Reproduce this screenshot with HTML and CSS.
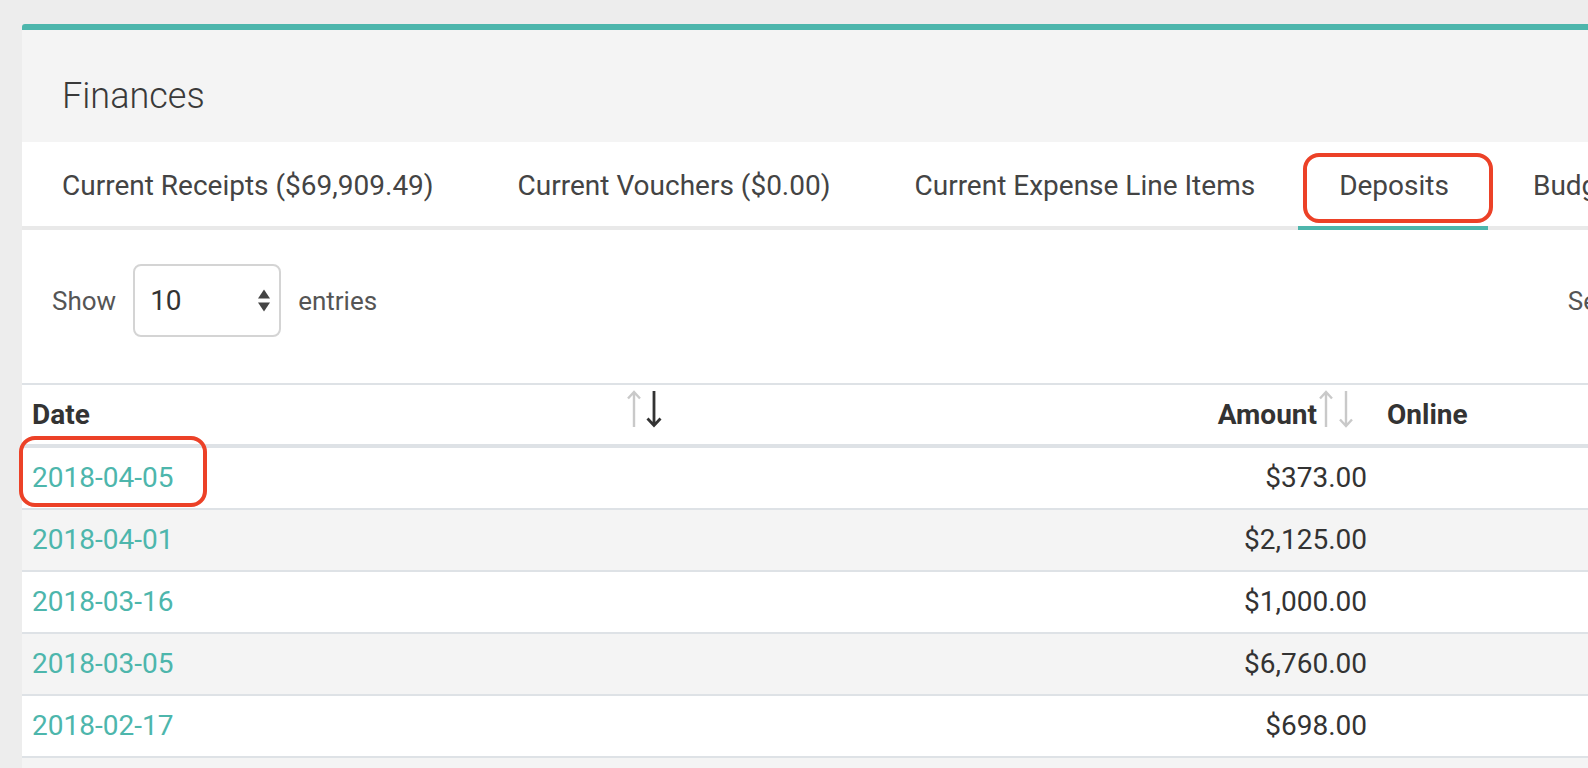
FILE: index.html
```html
<!DOCTYPE html>
<html>
<head>
<meta charset="UTF-8">
<meta name="viewport" content="width=device-width, initial-scale=1">
<title>Finances</title>
<link rel="stylesheet" href="styles.css">
</head>
<body>
<div class="card">
	<div class="card-title">Finances</div>

	<ul class="tabs">
		<li class="tab">Current Receipts ($69,909.49)</li>
		<li class="tab">Current Vouchers ($0.00)</li>
		<li class="tab">Current Expense Line Items</li>
		<li class="tab active">Deposits<span class="mark mark-tab"></span></li>
		<li class="tab">Budget</li>
		<li class="tab">Reports</li>
	</ul>

	<div class="toolbar">
		<div class="length">
			<span>Show</span>
			<span class="select">
				<span>10</span>
				<svg class="spin" width="12" height="23" viewBox="0 0 12 23">
					<path d="M0 9.5 L6 0.5 L12 9.5 Z" fill="#444"/>
					<path d="M0 13.5 L12 13.5 L6 22.5 Z" fill="#444"/>
				</svg>
			</span>
			<span>entries</span>
		</div>
		<div class="filter">
			<span>Search:</span>
			<span class="search"></span>
		</div>
	</div>

	<table class="grid">
		<colgroup>
			<col class="col-date">
			<col class="col-amount">
			<col>
		</colgroup>
		<thead>
			<tr>
				<th class="sort">Date
					<svg class="arrows" width="36" height="38" viewBox="0 0 36 38">
						<g fill="none" stroke-width="2.4">
							<path d="M7 2 V37 M1 8.5 L7 2 L13 8.5" stroke="#c9c9c9"/>
							<path d="M27 1 V35 M20.5 28.5 L27 35.5 L33.5 28.5" stroke="#333" stroke-width="2.8"/>
						</g>
					</svg>
				</th>
				<th class="sort num">Amount
					<svg class="arrows" width="36" height="38" viewBox="0 0 36 38">
						<g fill="none" stroke="#c9c9c9" stroke-width="2.4">
							<path d="M7 2 V37 M1 8.5 L7 2 L13 8.5"/>
							<path d="M27 1 V36 M21 29.5 L27 36 L33 29.5"/>
						</g>
					</svg>
				</th>
				<th>Online</th>
			</tr>
		</thead>
		<tbody>
			<tr><td><a class="link" href="#">2018-04-05<span class="mark mark-date"></span></a></td><td class="num">$373.00</td><td></td></tr>
			<tr><td><a class="link" href="#">2018-04-01</a></td><td class="num">$2,125.00</td><td></td></tr>
			<tr><td><a class="link" href="#">2018-03-16</a></td><td class="num">$1,000.00</td><td></td></tr>
			<tr><td><a class="link" href="#">2018-03-05</a></td><td class="num">$6,760.00</td><td></td></tr>
			<tr><td><a class="link" href="#">2018-02-17</a></td><td class="num">$698.00</td><td></td></tr>
			<tr><td><a class="link" href="#">2018-02-03</a></td><td class="num">$1,240.00</td><td></td></tr>
			<tr><td><a class="link" href="#">2018-01-20</a></td><td class="num">$515.00</td><td></td></tr>
		</tbody>
	</table>
</div>
</body>
</html>
```

FILE: styles.css
```css
html, body {
	margin: 0;
	padding: 0;
	overflow: hidden;
}
body {
	background-color: #ededed;
	font-family: Roboto, "Liberation Sans", sans-serif;
	color: #333;
}
div.card {
	width: 1972px;
	margin: 24px 0 0 22px;
	border-top: 6px solid #4db6ac;
	border-radius: 3px 0 0 0;
	background-color: #fff;
}
div.card-title {
	padding: 45px 41px 24px 40px;
	background-color: #f4f4f4;
	font-size: 36px;
	font-weight: 300;
	line-height: 43px;
	color: #3a3a3a;
}

/* tabs */
ul.tabs {
	display: flex;
	margin: 0;
	padding: 0;
	list-style: none;
	border-bottom: 4px solid #e9e9e9;
	white-space: nowrap;
}
li.tab {
	position: relative;
	padding: 4px 42px 0;
	font-size: 28px;
	line-height: 80px;
	color: #444;
}
li.tab:first-child {
	padding-left: 40px;
}
li.tab.active:after {
	content: "";
	position: absolute;
	left: 1px;
	right: 3px;
	bottom: -4px;
	height: 4px;
	background-color: #4db6ac;
}

/* red annotation boxes */
span.mark {
	position: absolute;
	box-sizing: border-box;
	border: 4px solid #ec4127;
	border-radius: 16px;
	pointer-events: none;
}
span.mark-tab {
	top: 11px;
	left: 6px;
	right: -2px;
	height: 70px;
}
span.mark-date {
	top: -25px;
	left: -13px;
	width: 188px;
	height: 71px;
}

/* length + filter */
div.toolbar {
	display: flex;
	align-items: center;
	padding: 34px 30px 46px 30px;
	font-size: 26px;
	color: #555;
}
div.length, div.filter {
	display: flex;
	align-items: center;
	gap: 17px;
}
div.filter {
	margin-left: auto;
	gap: 10px;
}
span.select {
	display: flex;
	align-items: center;
	box-sizing: border-box;
	width: 148px;
	height: 73px;
	padding: 0 9px 0 15px;
	border: 2px solid #d4d4d4;
	border-radius: 8px;
	font-size: 28px;
	color: #333;
}
svg.spin {
	margin-left: auto;
}
span.search {
	box-sizing: border-box;
	width: 300px;
	height: 73px;
	border: 2px solid #d4d4d4;
	border-radius: 8px;
}

/* table */
table.grid {
	width: 100%;
	table-layout: fixed;
	border-collapse: separate;
	border-spacing: 0;
	font-size: 28px;
	line-height: 33px;
}
col.col-date {
	width: 663px;
}
col.col-amount {
	width: 692px;
}
table.grid th {
	position: relative;
	padding: 13px 10px;
	border-top: 2px solid #dee2e6;
	border-bottom: 4px solid #dee2e6;
	text-align: left;
	font-weight: 700;
	color: #333;
}
table.grid th.sort {
	padding-right: 60px;
}
table.grid td {
	padding: 13px 10px 14px;
	border-bottom: 2px solid #dee2e6;
	color: #333;
}
table.grid .num {
	text-align: right;
}
table.grid tbody tr:nth-child(even) td {
	background-color: #f4f4f4;
}
svg.arrows {
	position: absolute;
	top: 5px;
	right: 22px;
}
a.link {
	position: relative;
	display: inline-block;
	color: #4db6ac;
	text-decoration: none;
}
```
